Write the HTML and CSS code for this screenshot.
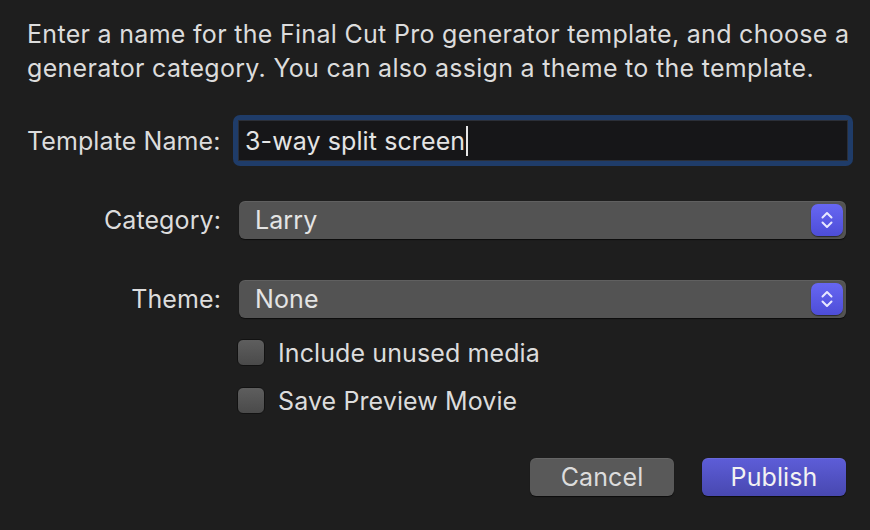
FILE: index.html
```html
<!DOCTYPE html>
<html lang="en">

<head>
    <meta charset="UTF-8">
    <meta name="viewport" content="width=device-width, initial-scale=1.0">
    <title>Publish Template</title>
    <link rel="stylesheet" href="styles.css">
</head>

<body>
    <div class="dialog">
        <p class="intro">Enter a name for the Final Cut Pro generator template, and choose a<br>generator category. You can also assign a theme to the template.</p>

        <div class="form">
            <label class="label label-name">Template Name:</label>
            <div class="focus-ring">
                <div class="text-field">3-way split screen<span class="caret"></span></div>
            </div>

            <label class="label">Category:</label>
            <div class="popup">
                <span>Larry</span>
                <span class="stepper">
                    <svg width="16" height="24" viewBox="0 0 16 24"><path d="M3.5 9.5 L8 5 L12.5 9.5 M3.5 14.5 L8 19 L12.5 14.5" fill="none" stroke="#e8e8ff" stroke-width="2" stroke-linecap="round" stroke-linejoin="round"/></svg>
                </span>
            </div>

            <label class="label">Theme:</label>
            <div class="popup">
                <span>None</span>
                <span class="stepper">
                    <svg width="16" height="24" viewBox="0 0 16 24"><path d="M3.5 9.5 L8 5 L12.5 9.5 M3.5 14.5 L8 19 L12.5 14.5" fill="none" stroke="#e8e8ff" stroke-width="2" stroke-linecap="round" stroke-linejoin="round"/></svg>
                </span>
            </div>

            <div class="checks">
                <div class="check"><span class="box"></span>Include unused media</div>
                <div class="check"><span class="box"></span>Save Preview Movie</div>
            </div>
        </div>

        <div class="buttons">
            <button class="btn">Cancel</button>
            <button class="btn primary">Publish</button>
        </div>
    </div>
</body>

</html>
```

FILE: styles.css
```css
body {
    margin: 0;
    padding: 0;
    background: #1e1e1e;
    color: #dcdcdc;
    font-family: Inter, "Noto Sans", sans-serif;
    font-size: 25px;
    letter-spacing: 0.1px;
    width: 870px;
    height: 530px;
    overflow: hidden;
}

.dialog {
    padding: 17px 17px 0 27px;
}

.intro {
    margin: 0;
    line-height: 34px;
    letter-spacing: 0.3px;
    white-space: nowrap;
}

.form {
    display: grid;
    grid-template-columns: 194px 1fr;
    column-gap: 12px;
    align-items: center;
    margin-top: 30px;
}

.label {
    text-align: right;
    white-space: nowrap;
}

.label-name {
    text-align: left;
}

.focus-ring {
    background: #1f3c69;
    border-radius: 7px;
    padding: 5px;
    height: 41px;
    display: flex;
}

.text-field {
    flex: 1;
    background: #161618;
    border: 1px solid #2b2f38;
    padding: 0 0 0 6px;
    display: flex;
    align-items: center;
    color: #e4e4e4;
}

.caret {
    display: inline-block;
    width: 2px;
    height: 30px;
    background: #e6e6e6;
    margin-left: 1px;
}

.popup {
    margin: 35px 7px 0 6px;
    height: 38px;
    background: #535353;
    border-radius: 6px;
    box-shadow: 0 1px 1px rgba(0, 0, 0, 0.6), inset 0 1px 0 rgba(255, 255, 255, 0.08);
    display: flex;
    align-items: center;
    justify-content: space-between;
    padding: 0 3px 0 16px;
    color: #e4e4e4;
}

.popup + .label {
    margin-top: 41px;
}

.form > .label:nth-of-type(2) {
    margin-top: 35px;
}

.popup:nth-of-type(3) {
    margin-top: 41px;
}

.stepper {
    width: 32px;
    height: 32px;
    border-radius: 7px;
    background: linear-gradient(#6767f2, #4d4dd8);
    box-shadow: 0 1px 1px rgba(0, 0, 0, 0.5);
    display: flex;
    align-items: center;
    justify-content: center;
}

.checks {
    grid-column: 2;
    margin-left: 4px;
    margin-top: 21px;
    display: flex;
    flex-direction: column;
    gap: 21px;
}

.check {
    display: flex;
    align-items: center;
    gap: 13px;
    height: 27px;
}

.box {
    width: 26px;
    height: 25px;
    border: 1px solid #121212;
    border-radius: 6px;
    background: linear-gradient(#5e5e5e, #4a4a4a);
}

.buttons {
    display: flex;
    justify-content: flex-end;
    gap: 28px;
    margin-top: 44px;
    padding-right: 7px;
}

.btn {
    width: 144px;
    height: 38px;
    border: none;
    border-radius: 6px;
    background: #595959;
    color: #dcdcdc;
    font-family: Inter, "Noto Sans", sans-serif;
    font-size: 25px;
    letter-spacing: 0.1px;
    box-shadow: 0 1px 1px rgba(0, 0, 0, 0.6), inset 0 1px 0 rgba(255, 255, 255, 0.08);
}

.primary {
    background: linear-gradient(#5d5dd8, #4848b0);
    color: #f2f2f2;
}
```
